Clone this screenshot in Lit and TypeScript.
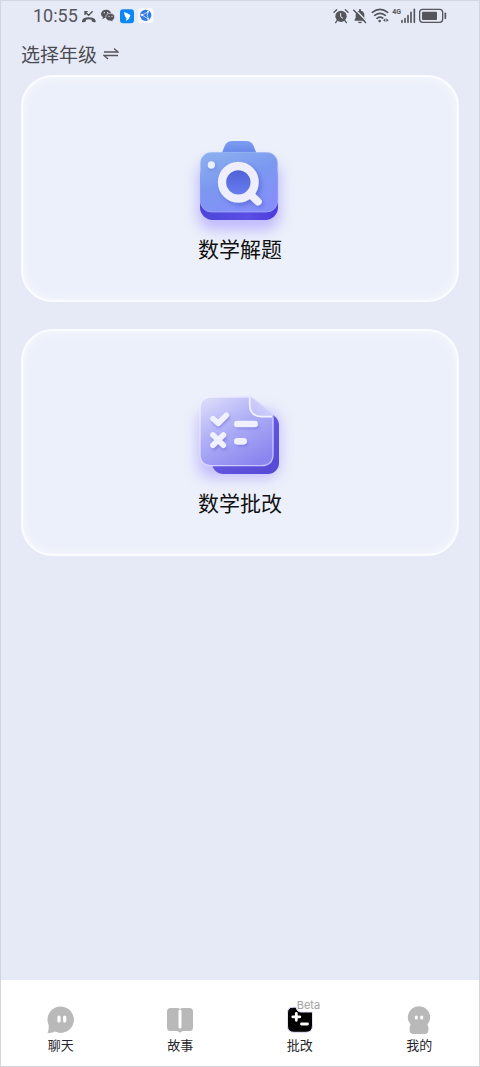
import { LitElement, html, css, svg } from "lit";
import { customElement, property } from "lit/decorators.js";

const cameraArt = html`<svg class="art" viewBox="0 0 360 345" aria-hidden="true">
  <defs>
    <linearGradient id="c-body" x1="0.1" y1="0" x2="0.6" y2="1">
      <stop offset="0" stop-color="#8db0ef" /><stop offset="0.5" stop-color="#7b98f0" /><stop offset="1" stop-color="#858ffa" />
    </linearGradient>
    <linearGradient id="c-base" x1="0" y1="0" x2="1" y2="0">
      <stop offset="0" stop-color="#4a45d8" /><stop offset="0.6" stop-color="#5a4ee4" /><stop offset="1" stop-color="#4c3ddb" />
    </linearGradient>
    <linearGradient id="c-top" x1="0" y1="0" x2="0" y2="1">
      <stop offset="0" stop-color="#7b9ff4" /><stop offset="1" stop-color="#6583e6" />
    </linearGradient>
    <linearGradient id="c-lens" x1="0" y1="0" x2="0" y2="1">
      <stop offset="0" stop-color="#4d5fd6" /><stop offset="1" stop-color="#6a80f0" />
    </linearGradient>
    <linearGradient id="c-edge" x1="0" y1="0" x2="0" y2="1">
      <stop offset="0" stop-color="#b4caf9" stop-opacity="0.6" /><stop offset="1" stop-color="#b0b4ff" />
    </linearGradient>
    <filter id="c-glow" x="-40%" y="-40%" width="180%" height="180%"><feGaussianBlur stdDeviation="21" /></filter>
    <filter id="c-soft" x="-40%" y="-40%" width="180%" height="180%"><feGaussianBlur stdDeviation="6" /></filter>
  </defs>
  <rect x="54" y="125" width="246" height="205" rx="44" fill="#a99cff" opacity="0.65" filter="url(#c-glow)" />
  <path d="M124 104 L134 78 Q140 63 158 63 H198 Q215 63 221 78 L231 104Z" fill="url(#c-top)" />
  <rect x="60" y="130" width="234" height="170" rx="38" fill="url(#c-base)" />
  <rect x="61" y="97" width="232" height="179" rx="33" fill="url(#c-body)" stroke="url(#c-edge)" stroke-width="2" />
  <circle cx="97" cy="141" r="11" fill="#5a76d8" opacity="0.5" filter="url(#c-soft)" />
  <circle cx="94" cy="135" r="11" fill="#e9effd" />
  <g fill="none" stroke="#4c5bcf" opacity="0.55" filter="url(#c-soft)" stroke-width="24">
    <circle cx="182" cy="195" r="50" /><path d="M216 232 L238 250" stroke-linecap="round" />
  </g>
  <circle cx="175" cy="187" r="42" fill="url(#c-lens)" />
  <g fill="none" stroke="#eeeefe">
    <path d="M212 224 L234 245" stroke-width="23" stroke-linecap="round" />
    <circle cx="175" cy="187" r="49" stroke-width="25" />
  </g>
</svg>`;

const sheetArt = html`<svg class="art" viewBox="0 -18 360 345" aria-hidden="true">
  <defs>
    <linearGradient id="s-page" x1="0.1" y1="0" x2="0.7" y2="1">
      <stop offset="0" stop-color="#dcdcfb" /><stop offset="0.45" stop-color="#b0b0f7" /><stop offset="1" stop-color="#8b86ef" />
    </linearGradient>
    <linearGradient id="s-base" x1="0" y1="0" x2="1" y2="1">
      <stop offset="0" stop-color="#6f63ea" /><stop offset="1" stop-color="#5548d4" />
    </linearGradient>
    <linearGradient id="s-fold" x1="0" y1="1" x2="1" y2="0">
      <stop offset="0" stop-color="#bcbcfa" /><stop offset="1" stop-color="#dcdcfd" />
    </linearGradient>
    <linearGradient id="s-edge" x1="0" y1="0" x2="1" y2="1">
      <stop offset="0" stop-color="#f5f2ff" /><stop offset="1" stop-color="#c1bdff" />
    </linearGradient>
    <filter id="s-glow" x="-40%" y="-40%" width="180%" height="180%"><feGaussianBlur stdDeviation="21" /></filter>
    <filter id="s-soft" x="-40%" y="-40%" width="180%" height="180%"><feGaussianBlur stdDeviation="5" /></filter>
  </defs>
  <rect x="52" y="90" width="248" height="205" rx="44" fill="#a99cff" opacity="0.6" filter="url(#s-glow)" />
  <rect x="96" y="102" width="201" height="180" rx="34" fill="url(#s-base)" />
  <path d="M94 51 H207 Q214 51 221 57 L272 99 Q279 105 279 114 V222 Q279 257 244 257 H95 Q60 257 60 222 V86 Q60 51 94 51Z" fill="url(#s-page)" stroke="url(#s-edge)" stroke-width="4" />
  <path d="M209 52 Q215 52 222 58 L272 99 Q277 104 276 110 H246 Q209 108 209 72Z" fill="url(#s-fold)" />
  <path d="M209 52 V72 Q209 110 246 110 H276" fill="none" stroke="#f3f3ff" stroke-width="5" />
  <g stroke="#6560d2" opacity="0.5" fill="none" stroke-linecap="round" stroke-linejoin="round" stroke-width="15" filter="url(#s-soft)">
    <path d="M102 122 L116 136 L143 112 M103 173 L133 203 M133 173 L103 203 M177 139 H229 M177 191 H196" />
  </g>
  <g stroke="#f0f1ff" fill="none" stroke-linecap="round" stroke-linejoin="round">
    <path d="M99 116 L115 130 L139 106 M99 165 L130 196 M130 165 L99 196" stroke-width="17" />
    <path d="M172 132 H224 M172 184 H191" stroke-width="20" />
  </g>
</svg>`;

const chatIcon = svg`<path fill="#b9b9b9" d="M16 2.5 A13.2 13.2 0 1 1 10 27.6 Q7 29.4 3.2 29 Q2 29 3 27.5 Q4 25.5 3.6 21 A13.2 13.2 0 0 1 16 2.5Z"/><path d="M14 13v4M19.700 13v4" stroke="#fff" stroke-width="3.2" stroke-linecap="round"/>`;
const bookIcon = svg`<path fill="#b9b9b9" d="M6.5 4H13Q15 4 16 5Q17 4 19 4H25.5Q29 4 29 7.500V23.500Q29 27 25.500 27H20Q18 27 17 28Q16 29 15 28Q14 27 12 27H6.500Q3 27 3 23.500V7.500Q3 4 6.500 4Z"/><path d="M16 7V23" stroke="#fff" stroke-width="3" stroke-linecap="round"/>`;
const gradeIcon = svg`<path fill="#000" stroke="#e3e0fb" stroke-width="1" d="M9 3.200H12Q13 8 17 8H28.500V21.500Q28.500 28.300 22 28.300H10Q3.500 28.300 3.500 22V9Q3.500 3.200 9 3.200Z"/><path d="M12.300 9.300v7M8.800 12.800h7M17.500 20h6" stroke="#fff" stroke-width="2.800" stroke-linecap="round"/>`;
const meIcon = svg`<path fill="#b9b9b9" d="M16 2.200A11.200 11.200 0 0 1 24.300 20.800Q25.400 21.800 25.400 24V26Q25.400 30 21.500 30H10.500Q6.600 30 6.600 26V24Q6.600 21.800 7.700 20.800A11.200 11.200 0 0 1 16 2.200Z"/><path d="M13.300 12.900v1M18.700 12.900v1" stroke="#fff" stroke-width="3" stroke-linecap="round"/>`;

@customElement("status-bar")
class StatusBar extends LitElement {
  static styles = css`
    :host { display: flex; justify-content: space-between; align-items: center; height: 30px; padding: 0 32px; color: #55565c; }
    .side { display: flex; align-items: center; gap: 3px; }
    .time { font: 18px/30px Roboto, sans-serif; }
    svg { height: 16px; width: 16px; display: block; }
    .wifi { width: 18px; }
    .signal { width: 15px; }
    .battery { width: 28px; }
    .net { font: bold 7px/8px "Roboto", sans-serif; align-self: flex-start; }
    .cell { display: flex; height: 16px; }
  `;
  render() {
    return html`
      <div class="side">
        <span class="time">10:55</span>
        <svg viewBox="243 22 48 48" aria-hidden="true"><path d="M246 60Q250 50 266 50Q283 50 287 60V64Q281 66 275 62V57Q266 54 258 57V62Q252 66 246 64Z" fill="currentColor"/><path d="M255 43V33H263M255 34L266 44L278 32" fill="none" stroke="currentColor" stroke-width="4"/></svg>
        <svg viewBox="299 22 48 48" aria-hidden="true"><path d="M317 27C308 27 302 33 302 40Q302 46 308 50L306 56L313 52H317C327 52 333 47 333 40S326 27 317 27Z" fill="currentColor"/><path d="M330 38C321 38 316 43 316 50S322 61 331 61L338 63L337 59Q343 56 343 49C343 43 338 38 330 38Z" fill="currentColor" stroke="#e6eaf6" stroke-width="2"/><g fill="#e6eaf6"><circle cx="312" cy="36" r="2"/><circle cx="322" cy="36" r="2"/><circle cx="326" cy="47" r="2"/><circle cx="335" cy="47" r="2"/></g></svg>
        <svg viewBox="354 22 48 48" aria-hidden="true"><rect x="357" y="26" width="42" height="42" rx="9" fill="#0d87f5"/><path d="M369 34Q379 37 388 43Q388 49 383 53H386L374 62L377 53Q371 49 369 34Z" fill="#fff"/></svg>
        <svg viewBox="411 22 48 48" aria-hidden="true"><rect x="412" y="22" width="45" height="45" rx="9" fill="#f7f9fe"/><circle cx="434" cy="44" r="17" fill="#3479e8"/><path d="M423 43L441 34Q436 44 442 55L423 43" fill="none" stroke="#b7d2fb" stroke-width="3"/><g fill="#e7f0ff"><circle cx="423" cy="43" r="4"/><circle cx="441" cy="33" r="3"/><circle cx="442" cy="55" r="3"/></g></svg>
      </div>
      <div class="side">
        <svg viewBox="41 22 48 48" aria-hidden="true"><circle cx="65" cy="47" r="17" fill="currentColor"/><path d="M44 35L52 27M86 35L78 27M53 60L49 66M77 60L81 66" stroke="currentColor" stroke-width="4" stroke-linecap="round"/><path d="M64 37V48L71 53" fill="none" stroke="#e6eaf6" stroke-width="3"/></svg>
        <svg viewBox="98 22 48 48" aria-hidden="true"><path d="M106 60V56L109 52V42Q110 31 119 30V28Q119 25 122 25T125 28V30Q135 32 135 43V52L139 56V60ZM116 63H128Q127 68 122 68T116 63Z" fill="currentColor"/><path d="M106 24L144 64" stroke="#e6eaf6" stroke-width="4"/><path d="M102 27L140 67" stroke="currentColor" stroke-width="4"/></svg>
        <svg class="wifi" viewBox="152 22 54 48" aria-hidden="true"><g fill="none" stroke="currentColor" stroke-width="5" stroke-linecap="round"><path d="M156 35Q179 17 202 35M163 44Q179 32 195 44M170 53Q179 46 187 52"/></g><circle cx="178" cy="61" r="4" fill="currentColor"/><path d="M195 53V64L188 59ZM198 53V64L205 59Z" fill="currentColor"/></svg>
        <span class="cell"><span class="net">4G</span>
        <svg class="signal" viewBox="237 22 45 48" aria-hidden="true"><path d="M240 60V65M249 54V65M258 45V65M267 35V65M277 26V65" stroke="currentColor" stroke-width="5" stroke-linecap="round"/></svg></span>
        <svg class="battery" viewBox="297 22 84 48" aria-hidden="true"><rect x="299" y="26" width="69" height="39" rx="9" fill="none" stroke="currentColor" stroke-width="4"/><rect x="306" y="33" width="45" height="25" rx="3" fill="currentColor"/><path d="M376 38V53" stroke="currentColor" stroke-width="5" stroke-linecap="round"/></svg>
      </div>`;
  }
}

@customElement("feature-card")
class FeatureCard extends LitElement {
  @property() label = "";
  @property({ attribute: false }) art: unknown;
  static styles = css`
    :host { display: block; }
    .card {
      width: 100%; box-sizing: border-box; display: flex; flex-direction: column; align-items: center;
      padding: 43px 0 39px; border: 2px solid #fbfcff; border-radius: 32px; background: #ecf0fa;
      box-shadow: inset 0 0 10px #f8faff; color: #111; cursor: pointer;
      font: 21px/26px "Noto Sans CJK SC", sans-serif;
    }
    .art { width: 120px; height: 115px; display: block; overflow: visible; }
    .label { position: relative; }
  `;
  render() {
    return html`<button class="card" type="button">${this.art}<span class="label">${this.label}</span></button>`;
  }
}

const tabs = [
  { label: "聊天", icon: chatIcon, badge: "" },
  { label: "故事", icon: bookIcon, badge: "" },
  { label: "批改", icon: gradeIcon, badge: "Beta" },
  { label: "我的", icon: meIcon, badge: "" },
];

@customElement("tab-bar")
class TabBar extends LitElement {
  static styles = css`
    :host { display: block; background: #fff; }
    .tabs { display: grid; grid-template-columns: repeat(4, 1fr); padding: 24px 0 12px; }
    .tab { display: flex; flex-direction: column; align-items: center; color: #26262c; text-decoration: none; font: 13px/18px "Noto Sans CJK SC", sans-serif; }
    .icon { position: relative; display: block; }
    svg { display: block; width: 32px; height: 32px; }
    .badge { position: absolute; left: 13px; top: -5px; font: 11px/12px "Inter", sans-serif; color: #a0a0a0; }
  `;
  render() {
    return html`<nav class="tabs">${tabs.map((t) => html`
      <a class="tab" href="#" aria-current=${t.badge ? "page" : "false"}>
        <span class="icon"><svg viewBox="0 0 32 32" fill="none" aria-hidden="true">${t.icon}</svg>${t.badge ? html`<span class="badge">${t.badge}</span>` : ""}</span>
        <span>${t.label}</span>
      </a>`)}</nav>`;
  }
}

@customElement("app-root")
class AppRoot extends LitElement {
  static styles = css`
    :host { display: flex; flex-direction: column; min-height: 100vh; box-sizing: border-box; border: 1px solid #d3d6de; background: #e6eaf6; font-family: "Noto Sans CJK SC", sans-serif; }
    .main { flex: 1; padding: 9px 20px 0; }
    .grade { display: flex; align-items: center; gap: 6px; margin: 0; padding: 0; border: 0; background: none; color: #4a4b52; font: 19px/28px "Noto Sans CJK SC", sans-serif; cursor: pointer; }
    .swap { display: block; width: 16px; height: 16px; }
    .cards { display: grid; gap: 27px; margin-top: 7px; }
  `;
  render() {
    return html`
      <status-bar></status-bar>
      <main class="main">
        <button class="grade" type="button">选择年级
          <svg class="swap" viewBox="0 0 16 16" fill="none" stroke="#55565c" stroke-width="1.3" aria-hidden="true"><path d="M1 6H15L11 2.500M15 9.500H1L5 13" /></svg>
        </button>
        <div class="cards">
          <feature-card label="数学解题" .art=${cameraArt}></feature-card>
          <feature-card label="数学批改" .art=${sheetArt}></feature-card>
        </div>
      </main>
      <tab-bar></tab-bar>`;
  }
}
